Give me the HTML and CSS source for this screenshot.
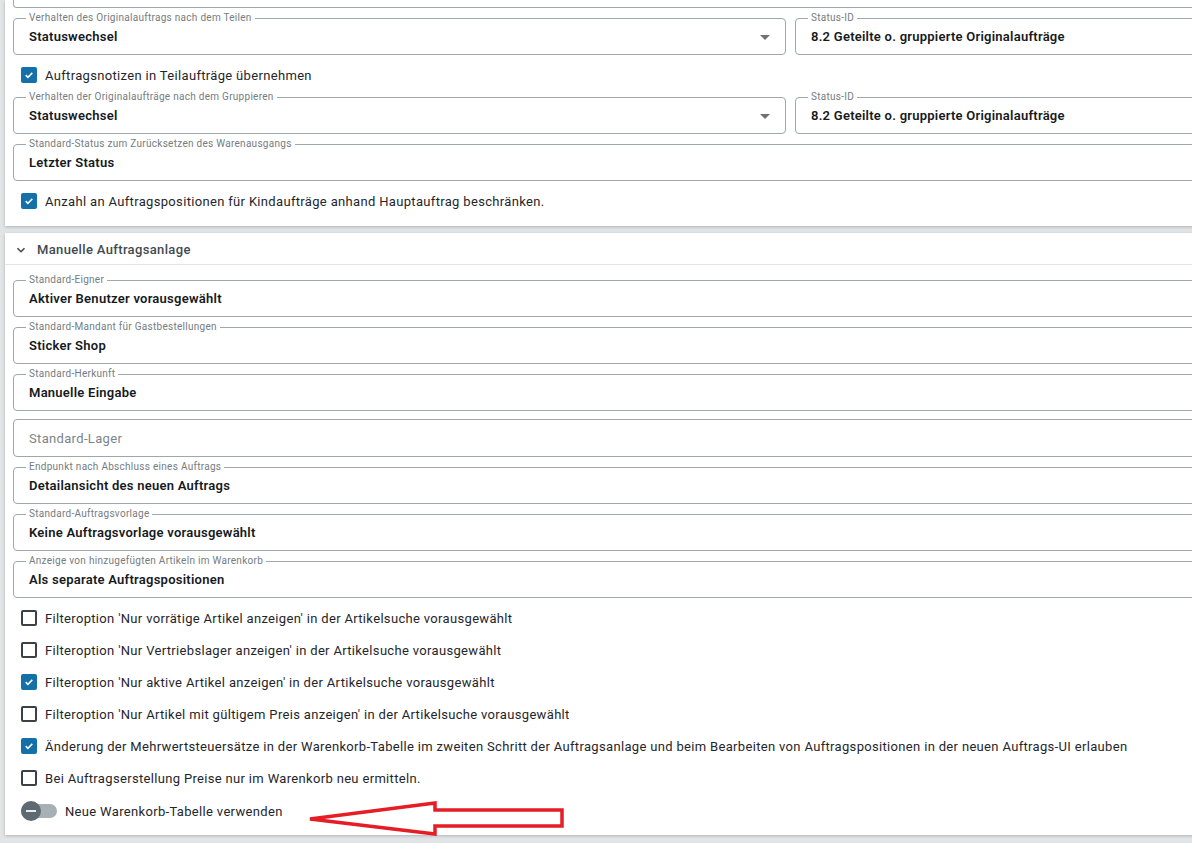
FILE: index.html
```html
<!DOCTYPE html>
<html lang="de">
<head>
  <meta charset="UTF-8" />
  <meta name="viewport" content="width=device-width, initial-scale=1.0"/>
  <title>Einstellungen Aufträge</title>
  <link rel="stylesheet" href="styles.css">
</head>
<body>
  <div class="page">
    <section class="card card-top">
      <div class="card-body">
        <div class="field-cut"></div>

        <div class="row-2">
          <fieldset class="field">
            <legend>Verhalten des Originalauftrags nach dem Teilen</legend>
            <div class="value"><span>Statuswechsel</span><span class="caret"></span></div>
          </fieldset>
          <fieldset class="field">
            <legend>Status-ID</legend>
            <div class="value"><span>8.2 Geteilte o. gruppierte Originalaufträge</span></div>
          </fieldset>
        </div>

        <label class="check"><span class="box on"><svg viewBox="0 0 16 16"><path d="M3.6 8.2l2.9 2.9L12.4 5.2"/></svg></span>Auftragsnotizen in Teilaufträge übernehmen</label>

        <div class="row-2">
          <fieldset class="field">
            <legend>Verhalten der Originalaufträge nach dem Gruppieren</legend>
            <div class="value"><span>Statuswechsel</span><span class="caret"></span></div>
          </fieldset>
          <fieldset class="field">
            <legend>Status-ID</legend>
            <div class="value"><span>8.2 Geteilte o. gruppierte Originalaufträge</span></div>
          </fieldset>
        </div>

        <fieldset class="field">
          <legend>Standard-Status zum Zurücksetzen des Warenausgangs</legend>
          <div class="value"><span>Letzter Status</span></div>
        </fieldset>

        <label class="check"><span class="box on"><svg viewBox="0 0 16 16"><path d="M3.6 8.2l2.9 2.9L12.4 5.2"/></svg></span>Anzahl an Auftragspositionen für Kindaufträge anhand Hauptauftrag beschränken.</label>
      </div>
    </section>

    <section class="card">
      <div class="card-head">
        <svg class="chevron" viewBox="0 0 10 10"><path d="M1.5 3.2l3.5 3.5 3.5-3.5"/></svg>
        <span>Manuelle Auftragsanlage</span>
      </div>
      <div class="card-body">
        <fieldset class="field">
          <legend>Standard-Eigner</legend>
          <div class="value"><span>Aktiver Benutzer vorausgewählt</span></div>
        </fieldset>
        <fieldset class="field">
          <legend>Standard-Mandant für Gastbestellungen</legend>
          <div class="value"><span>Sticker Shop</span></div>
        </fieldset>
        <fieldset class="field">
          <legend>Standard-Herkunft</legend>
          <div class="value"><span>Manuelle Eingabe</span></div>
        </fieldset>
        <div class="field empty">Standard-Lager</div>
        <fieldset class="field">
          <legend>Endpunkt nach Abschluss eines Auftrags</legend>
          <div class="value"><span>Detailansicht des neuen Auftrags</span></div>
        </fieldset>
        <fieldset class="field">
          <legend>Standard-Auftragsvorlage</legend>
          <div class="value"><span>Keine Auftragsvorlage vorausgewählt</span></div>
        </fieldset>
        <fieldset class="field">
          <legend>Anzeige von hinzugefügten Artikeln im Warenkorb</legend>
          <div class="value"><span>Als separate Auftragspositionen</span></div>
        </fieldset>

        <label class="check"><span class="box"></span>Filteroption 'Nur vorrätige Artikel anzeigen' in der Artikelsuche vorausgewählt</label>
        <label class="check"><span class="box"></span>Filteroption 'Nur Vertriebslager anzeigen' in der Artikelsuche vorausgewählt</label>
        <label class="check"><span class="box on"><svg viewBox="0 0 16 16"><path d="M3.6 8.2l2.9 2.9L12.4 5.2"/></svg></span>Filteroption 'Nur aktive Artikel anzeigen' in der Artikelsuche vorausgewählt</label>
        <label class="check"><span class="box"></span>Filteroption 'Nur Artikel mit gültigem Preis anzeigen' in der Artikelsuche vorausgewählt</label>
        <label class="check"><span class="box on"><svg viewBox="0 0 16 16"><path d="M3.6 8.2l2.9 2.9L12.4 5.2"/></svg></span>Änderung der Mehrwertsteuersätze in der Warenkorb-Tabelle im zweiten Schritt der Auftragsanlage und beim Bearbeiten von Auftragspositionen in der neuen Auftrags-UI erlauben</label>
        <label class="check"><span class="box"></span>Bei Auftragserstellung Preise nur im Warenkorb neu ermitteln.</label>

        <label class="check toggle-row">
          <span class="toggle"><span class="knob"></span></span>
          <span>Neue Warenkorb-Tabelle verwenden</span>
        </label>
      </div>
    </section>
  </div>

  <!-- annotation drawn over the screenshot -->
  <svg class="arrow" viewBox="0 0 1192 843">
    <polygon points="310,819 435,803 435,810 562,810 562,826 435,826 435,834"/>
  </svg>
</body>
</html>
```

FILE: styles.css
```css
* {
  box-sizing: border-box;
}

html, body {
  overflow: hidden;
}

body {
  margin: 0;
  background: #e1e5e8;
  font-family: Roboto, "Noto Sans", sans-serif;
  font-size: 13px;
  letter-spacing: 0.33px;
  color: #1f262b;
}

.page {
  width: 1500px;
  padding-left: 5px;
}

.card {
  background: #fff;
  box-shadow: 0 1px 3px rgba(0, 0, 0, 0.22);
  margin-bottom: 7px;
}

.card-body {
  display: flex;
  flex-direction: column;
  gap: 4px;
  padding: 9px 8px 12px;
}

.card-top .card-body {
  padding-top: 0;
  padding-bottom: 13px;
}

.field-cut {
  height: 8px;
  border: 1px solid #9ea7ac;
  border-top: none;
  border-radius: 0 0 4px 4px;
}

.card-head {
  display: flex;
  align-items: center;
  gap: 11px;
  height: 32px;
  padding: 2px 0 0 11px;
  border-bottom: 1px solid #e2e4e6;
  font-weight: 500;
  color: #3f4a50;
  letter-spacing: 0.35px;
}

.chevron {
  width: 10px;
  height: 10px;
  fill: none;
  stroke: #3f4a50;
  stroke-width: 1.6;
}

.row-2 {
  display: grid;
  grid-template-columns: 773px 1fr;
  gap: 9px;
}

.field {
  margin: 0;
  min-width: 0;
  padding: 0 15px 7px;
  border: 1px solid #9ea7ac;
  border-radius: 4px;
}

.field legend {
  padding: 0 3px;
  margin-left: -3px;
  font-size: 10px;
  line-height: 12px;
  letter-spacing: 0.28px;
  color: #757c81;
}

.value {
  display: flex;
  justify-content: space-between;
  align-items: center;
  margin-top: 3px;
  line-height: 20px;
  font-weight: 600;
  letter-spacing: 0.25px;
  color: #161a1d;
}

.caret {
  width: 0;
  height: 0;
  border-left: 5px solid transparent;
  border-right: 5px solid transparent;
  border-top: 5px solid #6b7378;
}

.field.empty {
  height: 38px;
  margin-top: 4px;
  padding: 0 15px;
  display: flex;
  align-items: center;
  color: #7d8489;
}

.check {
  display: flex;
  align-items: center;
  gap: 8px;
  height: 28px;
  padding: 4px 0 0 8px;
}

.box {
  flex: none;
  width: 16px;
  height: 16px;
  border: 2px solid #3a4247;
  border-radius: 2px;
}

.box.on {
  background: #1470a8;
  border-color: #1470a8;
}

.box svg {
  display: block;
  width: 12px;
  height: 12px;
  fill: none;
  stroke: #fff;
  stroke-width: 2;
}

.toggle-row {
  margin-top: 1px;
}

.toggle {
  position: relative;
  flex: none;
  width: 36px;
  height: 14px;
  border-radius: 7px;
  background: #a7b0b5;
}

.knob {
  position: absolute;
  left: 0;
  top: -3px;
  width: 20px;
  height: 20px;
  border-radius: 50%;
  background: #5e6a71;
}

.knob::after {
  content: "";
  position: absolute;
  left: 5px;
  top: 9px;
  width: 10px;
  height: 2px;
  background: #e8ecee;
}

.arrow {
  position: absolute;
  left: 0;
  top: 0;
  width: 1192px;
  height: 843px;
  pointer-events: none;
}

.arrow polygon {
  fill: none;
  stroke: #e51d25;
  stroke-width: 3.5;
  stroke-linejoin: miter;
}
```
